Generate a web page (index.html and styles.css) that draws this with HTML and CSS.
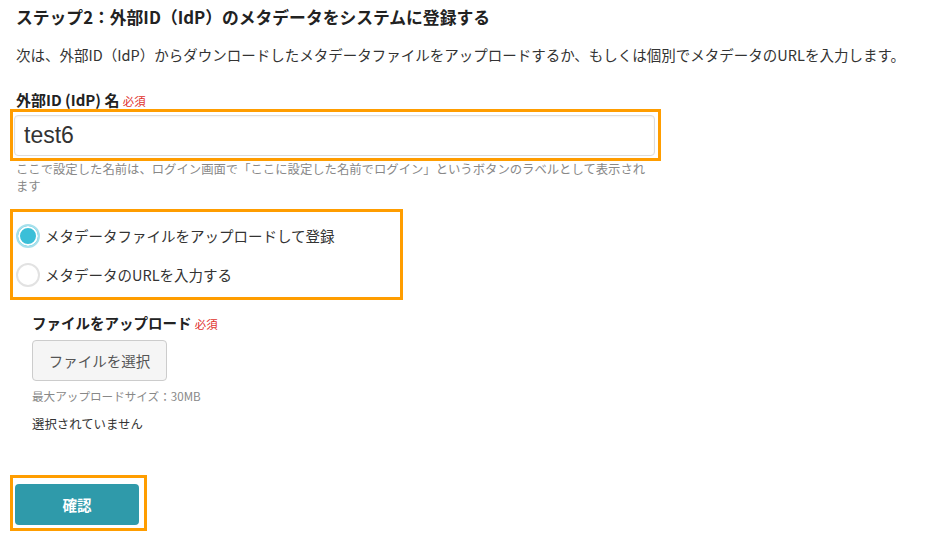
FILE: index.html
```html
<!DOCTYPE html>
<html lang="ja">
<head>
  <meta charset="UTF-8" />
  <title>外部IDの登録</title>
  <link rel="stylesheet" href="styles.css">
</head>
<body>

  <div class="step">
    <h2 class="step-title">ステップ2：外部ID（IdP）のメタデータをシステムに登録する</h2>
    <p class="step-desc">次は、外部ID（IdP）からダウンロードしたメタデータファイルをアップロードするか、もしくは個別でメタデータのURLを入力します。</p>

    <!-- IdP name -->
    <div class="field">
      <label class="field-label">外部ID (IdP) 名 <span class="required">必須</span></label>
      <div class="mark mark-input">
        <input class="text-input" type="text" value="test6">
      </div>
      <p class="help">ここで設定した名前は、ログイン画面で「ここに設定した名前でログイン」というボタンのラベルとして表示されます</p>
    </div>

    <!-- metadata source -->
    <div class="mark mark-radio">
      <label class="radio-row">
        <span class="radio checked"></span>
        <span>メタデータファイルをアップロードして登録</span>
      </label>
      <label class="radio-row">
        <span class="radio"></span>
        <span>メタデータのURLを入力する</span>
      </label>
    </div>

    <div class="upload">
      <div class="field-label upload-label">ファイルをアップロード <span class="required">必須</span></div>
      <button class="file-btn">ファイルを選択</button>
      <div class="upload-note">最大アップロードサイズ：30MB</div>
      <div class="upload-status">選択されていません</div>
    </div>

    <div class="mark mark-submit">
      <button class="submit-btn">確認</button>
    </div>
  </div>

</body>
</html>
```

FILE: styles.css
```css
* { margin: 0; padding: 0; box-sizing: border-box; }

body {
  background: white;
  color: #333;
  font-family: "Noto Sans CJK JP", "Noto Sans", sans-serif;
}

.step {
  padding: 5px 0 0 16px;
}

.step-title {
  font-size: 16.8px;
  line-height: 24px;
  font-weight: bold;
  color: #222;
}

.step-desc {
  margin-top: 15px;
  font-size: 14.5px;
  line-height: 22px;
}

.field {
  margin-top: 26px;
  width: 645px;
}

.field-label {
  display: block;
  font-size: 15px;
  line-height: 16px;
  font-weight: bold;
  color: #222;
}

.required {
  font-size: 11.4px;
  font-weight: normal;
  color: #e0322c;
}

/* orange highlight frames */
.mark {
  border: 3px solid #ff9d00;
  margin-left: -6px;
}

.mark-input {
  width: 651px;
  padding: 3px 3px 2px 1px;
}

.text-input {
  display: block;
  width: 100%;
  height: 41px;
  border: 1px solid #ddd;
  border-radius: 4px;
  padding: 0 9px;
  font-family: "Liberation Sans", Arial, sans-serif;
  font-size: 23px;
  color: #333;
  box-shadow: inset 0 1px 2px rgba(0, 0, 0, 0.05);
  outline: none;
}

.help {
  width: 640px;
  font-size: 12.35px;
  line-height: 17px;
  color: #888;
}

.mark-radio {
  margin-top: 14px;
  width: 393px;
  padding: 4px 0 3px 3px;
}

.radio-row {
  display: flex;
  align-items: center;
  gap: 5px;
  height: 39px;
  font-size: 14.5px;
  color: #333;
}

.radio {
  width: 24px;
  height: 24px;
  border-radius: 50%;
  border: 2px solid #e2e2e2;
  background: white;
  flex-shrink: 0;
}

.radio.checked {
  border-color: #a6e0ec;
  background: #3bbfd8;
  box-shadow: inset 0 0 0 2px white;
}

.upload {
  padding-left: 16px;
  margin-top: 13px;
}

.upload-label {
  font-size: 14.5px;
  line-height: 20px;
}

.file-btn {
  display: block;
  margin-top: 6px;
  width: 135px;
  height: 41px;
  background: #f5f5f5;
  border: 1px solid #ccc;
  border-radius: 4px;
  font-family: inherit;
  font-size: 14.5px;
  color: #555;
}

.upload-note {
  margin-top: 7px;
  font-size: 11.6px;
  line-height: 16px;
  color: #888;
}

.upload-status {
  margin-top: 11px;
  font-size: 12.4px;
  line-height: 18px;
  color: #333;
}

.mark-submit {
  margin-top: 42px;
  width: 137px;
  padding: 6px 5px 3px 2px;
}

.submit-btn {
  display: block;
  width: 124px;
  height: 41px;
  background: #2f9aaa;
  border: none;
  border-radius: 4px;
  font-family: inherit;
  font-size: 14.5px;
  font-weight: bold;
  color: white;
}
```
